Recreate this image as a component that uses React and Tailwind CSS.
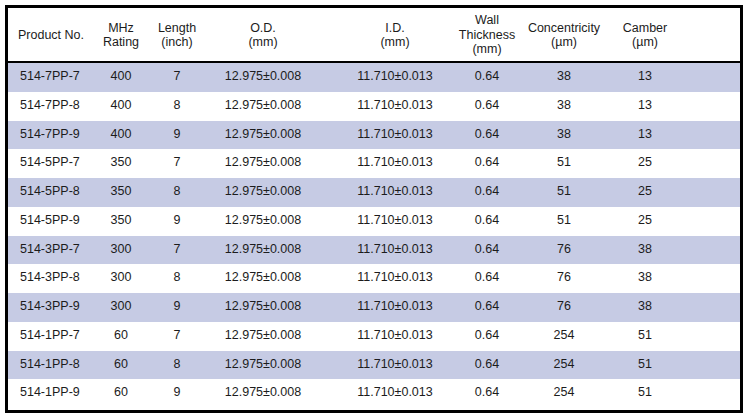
const rows = [
  ["514-7PP-7", "400", "7", "38", "13"],
  ["514-7PP-8", "400", "8", "38", "13"],
  ["514-7PP-9", "400", "9", "38", "13"],
  ["514-5PP-7", "350", "7", "51", "25"],
  ["514-5PP-8", "350", "8", "51", "25"],
  ["514-5PP-9", "350", "9", "51", "25"],
  ["514-3PP-7", "300", "7", "76", "38"],
  ["514-3PP-8", "300", "8", "76", "38"],
  ["514-3PP-9", "300", "9", "76", "38"],
  ["514-1PP-7", "60", "7", "254", "51"],
  ["514-1PP-8", "60", "8", "254", "51"],
  ["514-1PP-9", "60", "9", "254", "51"],
];

const cols = "grid grid-cols-[87px_52px_60px_112px_152px_32px_122px_40px_75px]";

// centred cell; flex keeps wide text overflowing evenly on both sides
function Cell({ children }) {
  return (
    <div className="flex justify-center items-center whitespace-nowrap text-center">
      <span>{children}</span>
    </div>
  );
}

export default function App() {
  return (
    <div className="w-[748px] h-[419px] bg-white p-[5px] font-['Liberation_Sans',Arial,sans-serif] text-[12.5px] text-[#1c1c1c]">
      <div className="w-[738px] h-[408px] border-[3px] border-black flex flex-col">
        {/* header */}
        <div className={`${cols} h-[55px] pt-[1px] leading-[14.5px] border-b-2 border-black`}>
          <div className="flex items-center pl-[10px] whitespace-nowrap">Product No.</div>
          <Cell>MHz<br />Rating</Cell>
          <Cell>Length<br />(inch)</Cell>
          <Cell>O.D.<br />(mm)</Cell>
          <Cell>I.D.<br />(mm)</Cell>
          <Cell>Wall<br />Thickness<br />(mm)</Cell>
          <Cell>Concentricity<br />(µm)</Cell>
          <Cell>Camber<br />(µm)</Cell>
          <div />
        </div>

        {/* rows */}
        {rows.map((r, i) => (
          <div
            key={r[0]}
            className={`${cols} h-[28.75px] pb-[2px] ${i % 2 === 0 ? "bg-[#c6cbe4]" : "bg-white"}`}
          >
            <div className="flex items-center pl-[12px] whitespace-nowrap">{r[0]}</div>
            <Cell>{r[1]}</Cell>
            <Cell>{r[2]}</Cell>
            <Cell>12.975±0.008</Cell>
            <Cell>11.710±0.013</Cell>
            <Cell>0.64</Cell>
            <Cell>{r[3]}</Cell>
            <Cell>{r[4]}</Cell>
            <div />
          </div>
        ))}
      </div>
    </div>
  );
}
